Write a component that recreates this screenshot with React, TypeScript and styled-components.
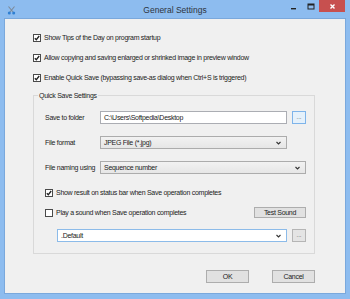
import React from 'react';
import styled, { createGlobalStyle } from 'styled-components';

const GlobalStyle = createGlobalStyle`
  html, body {
    margin: 0;
    padding: 0;
  }
  body {
    width: 350px;
    height: 299px;
    overflow: hidden;
    font-family: 'Liberation Sans', Arial, sans-serif;
    color: #222;
  }
`;

const Window = styled.div`
  width: 350px;
  height: 299px;
  box-sizing: border-box;
  display: flex;
  flex-direction: column;
  padding: 0 5px 6px 5px;
  background: #8dbcef;
`;

const TitleBar = styled.div`
  height: 19px;
  flex-shrink: 0;
  display: grid;
  grid-template-columns: 1fr auto 1fr;
  align-items: center;
`;

const TitleText = styled.div`
  font-size: 8.5px;
  color: #2e3440;
`;

const AppIcon = styled.div`
  display: flex;
  align-items: center;
  padding-left: 2px;
  padding-top: 1px;
`;

const Controls = styled.div`
  display: flex;
  justify-content: flex-end;
  align-self: start;
  align-items: flex-start;
`;

const CaptionButton = styled.div<{ close?: boolean }>`
  width: ${p => (p.close ? 26 : 17)}px;
  height: 12px;
  display: flex;
  align-items: center;
  justify-content: center;
  background: ${p => (p.close ? '#c7504f' : 'transparent')};
`;

const Client = styled.div`
  flex: 1;
  background: #f0f0f0;
  box-shadow: 0 0 0 1px #7aa8dc;
  padding: 12px 30px 0 28px;
  display: flex;
  flex-direction: column;
  font-size: 7px;
  letter-spacing: -0.28px;
`;

const CheckRow = styled.label<{ mt?: number }>`
  display: flex;
  align-items: center;
  height: 13px;
  gap: 3px;
  margin-top: ${p => p.mt ?? 0}px;
  white-space: nowrap;
`;

const Box = styled.span`
  width: 8px;
  height: 8px;
  box-sizing: border-box;
  border: 1px solid #4a4a4a;
  background: #fff;
  display: flex;
  align-items: center;
  justify-content: center;
  flex-shrink: 0;
`;

const GroupBox = styled.div`
  position: relative;
  margin-top: 11px;
  border: 1px solid #d9d9d9;
  padding: 15px 8px 11px 11px;
  display: flex;
  flex-direction: column;
`;

const GroupTitle = styled.span`
  position: absolute;
  left: 4px;
  top: -5px;
  padding: 0 1px;
  line-height: 9px;
  background: #f0f0f0;
`;

const FieldRow = styled.div<{ mt?: number }>`
  display: flex;
  align-items: center;
  height: 13px;
  margin-top: ${p => p.mt ?? 0}px;
`;

const FieldLabel = styled.span`
  width: 55px;
  flex-shrink: 0;
  white-space: nowrap;
`;

const TextBox = styled.div<{ w: number }>`
  width: ${p => p.w}px;
  height: 13px;
  box-sizing: border-box;
  border: 1px solid #abadb3;
  background: #fff;
  display: flex;
  align-items: center;
  padding-left: 3px;
`;

const Combo = styled.div<{ w: number; editable?: boolean; ml?: number }>`
  width: ${p => p.w}px;
  height: 13px;
  box-sizing: border-box;
  margin-left: ${p => p.ml ?? 0}px;
  border: 1px solid ${p => (p.editable ? '#8cbbe9' : '#acacac')};
  background: ${p => (p.editable ? '#fff' : 'linear-gradient(#f2f2f2, #e6e6e6)')};
  display: flex;
  align-items: center;
  justify-content: space-between;
  padding: 0 5px 0 3px;
`;

const SmallButton = styled.div<{ focused?: boolean }>`
  width: 14px;
  height: 13px;
  box-sizing: border-box;
  margin-left: 5px;
  border: 1px solid ${p => (p.focused ? '#7eb4ea' : '#b5b5b5')};
  background: ${p => (p.focused ? '#e5f1fb' : '#e4e4e4')};
  display: flex;
  align-items: center;
  justify-content: center;
  font-size: 6px;
  letter-spacing: 0;
  color: #444;
  padding-bottom: 1px;
`;

const PushButton = styled.div<{ w: number; h: number }>`
  width: ${p => p.w}px;
  height: ${p => p.h}px;
  box-sizing: border-box;
  border: 1px solid #adadad;
  background: #e1e1e1;
  display: flex;
  align-items: center;
  justify-content: center;
  white-space: nowrap;
`;

const Spacer = styled.div`
  flex: 1;
`;

const Footer = styled.div`
  display: flex;
  justify-content: flex-end;
  gap: 23px;
  margin-top: 16px;
`;

const Check = () => (
  <svg width="6" height="6" viewBox="0 0 6 6">
    <path d="M0.8 3.2 L2.3 4.7 L5.2 1" fill="none" stroke="#222" strokeWidth="1.3" />
  </svg>
);

const Chevron = () => (
  <svg width="5" height="4" viewBox="0 0 5 4">
    <path d="M0.5 1 L2.5 3 L4.5 1" fill="none" stroke="#333" strokeWidth="1.1" />
  </svg>
);

const CheckItem: React.FC<{ checked?: boolean; mt?: number; children: React.ReactNode }> = ({
  checked,
  mt,
  children,
}) => (
  <CheckRow mt={mt}>
    <Box>{checked && <Check />}</Box>
    {children}
  </CheckRow>
);

export default function App() {
  return (
    <>
      <GlobalStyle />
      <Window>
        <TitleBar>
          <AppIcon>
            <svg width="9" height="9" viewBox="0 0 9 9">
              <path d="M1.5 0.5 L6 6 M7.5 0.5 L3 6" stroke="#7d8a99" strokeWidth="1.1" />
              <circle cx="2.3" cy="7" r="1.5" fill="#2f7fd2" />
              <circle cx="6.7" cy="7" r="1.5" fill="#2f7fd2" />
            </svg>
          </AppIcon>
          <TitleText>General Settings</TitleText>
          <Controls>
            <CaptionButton>
              <svg width="7" height="7" viewBox="0 0 7 7">
                <rect x="1" y="5" width="5" height="1.4" fill="#222" />
              </svg>
            </CaptionButton>
            <CaptionButton>
              <svg width="8" height="7" viewBox="0 0 8 7">
                <rect x="1" y="1" width="6" height="5" fill="none" stroke="#222" strokeWidth="1" />
                <rect x="1" y="1" width="6" height="1.5" fill="#222" />
              </svg>
            </CaptionButton>
            <CaptionButton close>
              <svg width="7" height="7" viewBox="0 0 7 7">
                <path d="M1.5 1.5 L5.5 5.5 M5.5 1.5 L1.5 5.5" stroke="#fff" strokeWidth="1.4" />
              </svg>
            </CaptionButton>
          </Controls>
        </TitleBar>
        <Client>
          <CheckItem checked>Show Tips of the Day on program startup</CheckItem>
          <CheckItem checked mt={7}>
            Allow copying and saving enlarged or shrinked image in preview window
          </CheckItem>
          <CheckItem checked mt={7}>
            Enable Quick Save (bypassing save-as dialog when Ctrl+S is triggered)
          </CheckItem>

          <GroupBox>
            <GroupTitle>Quick Save Settings</GroupTitle>
            <FieldRow>
              <FieldLabel>Save to folder</FieldLabel>
              <TextBox w={187}>C:\Users\Softpedia\Desktop</TextBox>
              <SmallButton focused>...</SmallButton>
            </FieldRow>
            <FieldRow mt={12}>
              <FieldLabel>File format</FieldLabel>
              <Combo w={187}>
                <span>JPEG File (*.jpg)</span>
                <Chevron />
              </Combo>
            </FieldRow>
            <FieldRow mt={12}>
              <FieldLabel>File naming using</FieldLabel>
              <Combo w={206}>
                <span>Sequence number</span>
                <Chevron />
              </Combo>
            </FieldRow>
            <CheckItem checked mt={12}>
              Show result on status bar when Save operation completes
            </CheckItem>
            <FieldRow mt={7}>
              <CheckItem>Play a sound when Save operation completes</CheckItem>
              <Spacer />
              <PushButton w={52} h={11}>
                Test Sound
              </PushButton>
            </FieldRow>
            <FieldRow mt={10}>
              <Combo w={230} ml={12} editable>
                <span>.Default</span>
                <Chevron />
              </Combo>
              <SmallButton>...</SmallButton>
            </FieldRow>
          </GroupBox>

          <Footer>
            <PushButton w={43} h={13}>
              OK
            </PushButton>
            <PushButton w={43} h={13}>
              Cancel
            </PushButton>
          </Footer>
        </Client>
      </Window>
    </>
  );
}
